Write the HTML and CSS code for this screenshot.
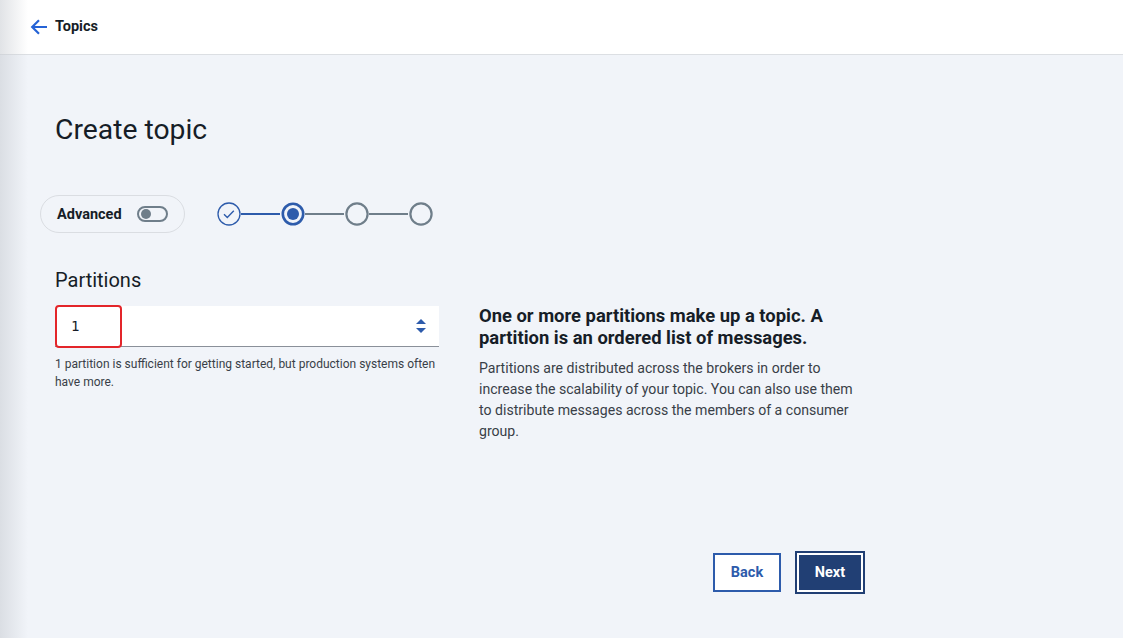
FILE: index.html
```html
<!DOCTYPE html>
<html lang="en">
<head>
<meta charset="utf-8">
<title>Create topic</title>
<link rel="stylesheet" href="styles.css">
</head>
<body>
<div class="shade"></div>
<header class="topbar">
  <a class="back-link" href="#">
    <svg class="back-icon" width="18" height="16" viewBox="0 0 18 16" aria-hidden="true">
      <path d="M17 8H2.5M9 1.2L2.2 8 9 14.8" fill="none" stroke="#2563d6" stroke-width="2.2"/>
    </svg>
    <span>Topics</span>
  </a>
</header>
<main class="page">
  <h1 class="title">Create topic</h1>
  <div class="controls">
    <div class="adv-pill">
      <span class="adv-label">Advanced</span>
      <span class="switch"><span class="knob"></span></span>
    </div>
    <svg class="stepper" width="218" height="28" viewBox="0 0 218 28" aria-hidden="true">
      <line x1="24" y1="14" x2="63" y2="14" stroke="#2d5bab" stroke-width="2"/>
      <line x1="88" y1="14" x2="127" y2="14" stroke="#6f7e8a" stroke-width="2"/>
      <line x1="152" y1="14" x2="191" y2="14" stroke="#6f7e8a" stroke-width="2"/>
      <circle cx="12" cy="14" r="11" fill="none" stroke="#2d5bab" stroke-width="1.3"/>
      <path d="M7 14.2l3.3 3.2 6.5-6.6" fill="none" stroke="#2d5bab" stroke-width="1.4"/>
      <circle cx="76" cy="14" r="10.2" fill="none" stroke="#2d5bab" stroke-width="2.6"/>
      <circle cx="76" cy="14" r="6" fill="#2d5bab"/>
      <circle cx="140" cy="14" r="10.6" fill="none" stroke="#6f7e8a" stroke-width="2.2"/>
      <circle cx="204" cy="14" r="10.6" fill="none" stroke="#6f7e8a" stroke-width="2.2"/>
    </svg>
  </div>

  <h2 class="section">Partitions</h2>
  <div class="cols">
    <div class="col-left">
      <div class="field">
        <span class="field-value">1</span>
        <span class="highlight"></span>
        <svg class="spin" width="12" height="16" viewBox="0 0 12 16" aria-hidden="true">
          <path d="M1 6L6 1l5 5z" fill="#2d5bab"/>
          <path d="M1 10l5 5 5-5z" fill="#2d5bab"/>
        </svg>
      </div>
      <p class="helper">1 partition is sufficient for getting started, but production systems often have more.</p>
    </div>
    <div class="col-right">
      <h3 class="info-title">One or more partitions make up a topic. A partition is an ordered list of messages.</h3>
      <p class="info-body">Partitions are distributed across the brokers in order to increase the scalability of your topic. You can also use them to distribute messages across the members of a consumer group.</p>
    </div>
  </div>
  <div class="actions">
    <button class="btn btn-secondary" type="button">Back</button>
    <button class="btn btn-primary" type="button">Next</button>
  </div>
</main>
</body>
</html>
```

FILE: styles.css
```css
* { box-sizing: border-box; }

html, body {
  margin: 0;
  padding: 0;
}

body {
  background: #f1f4f9;
  font-family: Roboto, "Liberation Sans", sans-serif;
  color: #161d27;
  width: 1123px;
  height: 638px;
  overflow: hidden;
  position: relative;
}

.shade {
  position: absolute;
  left: 0;
  top: 0;
  width: 28px;
  height: 100%;
  background: linear-gradient(to right, rgba(200, 204, 210, 0.55), rgba(200, 204, 210, 0));
  pointer-events: none;
  z-index: 5;
}

.topbar {
  height: 55px;
  background: #ffffff;
  border-bottom: 1px solid #dcdfe3;
  display: flex;
  align-items: center;
  padding-left: 30px;
}

.back-link {
  display: flex;
  align-items: center;
  gap: 7px;
  text-decoration: none;
  color: #161d27;
  font-weight: 700;
  font-size: 14.5px;
  margin-top: -1px;
}

.back-icon { display: block; }

.page {
  padding: 57px 0 0 55px;
  width: 865px;
}

.title {
  margin: 0;
  font-size: 28.3px;
  line-height: 36px;
  font-weight: 400;
  color: #161d27;
}

.controls {
  display: flex;
  align-items: center;
  margin: 47px 0 0 -15px;
  gap: 32px;
}

.adv-pill {
  width: 145px;
  height: 38px;
  border: 1px solid #dadde2;
  border-radius: 19px;
  display: flex;
  align-items: center;
  padding-left: 16px;
}

.adv-label {
  font-size: 14.5px;
  font-weight: 700;
  color: #161d27;
  width: 80px;
}

.switch {
  width: 31px;
  height: 16px;
  border: 2px solid #6f7e8a;
  border-radius: 8px;
  position: relative;
}

.knob {
  position: absolute;
  left: 2px;
  top: 1px;
  width: 10px;
  height: 10px;
  border-radius: 50%;
  background: #6f7e8a;
}

.stepper { display: block; }

.section {
  margin: 33px 0 0;
  font-size: 20px;
  line-height: 28px;
  font-weight: 400;
  color: #161d27;
}

.cols {
  display: grid;
  grid-template-columns: 384px 385px;
  column-gap: 40px;
  margin-top: 11px;
}

.field {
  position: relative;
  height: 41px;
  background: #ffffff;
  border-bottom: 1px solid #8a9099;
  display: flex;
  align-items: center;
  padding-left: 16px;
  margin-top: 1px;
}

.field-value {
  font-family: "DejaVu Sans Mono", "Liberation Mono", monospace;
  font-size: 14px;
  color: #161d27;
}

.highlight {
  position: absolute;
  left: 0;
  top: -1px;
  width: 67px;
  height: 43px;
  border: 2px solid #e3252a;
  border-radius: 4px;
}

.spin {
  position: absolute;
  right: 12px;
  top: 12px;
}

.helper {
  margin: 8px 0 0;
  font-size: 12px;
  line-height: 18px;
  color: #393f48;
}

.info-title {
  margin: 0;
  font-size: 18.4px;
  line-height: 22px;
  font-weight: 700;
  color: #161d27;
}

.info-body {
  margin: 9px 0 0;
  font-size: 14.1px;
  line-height: 21px;
  color: #393f48;
}

.actions {
  display: flex;
  justify-content: flex-end;
  align-items: center;
  gap: 14px;
  margin-top: 109px;
}

.btn {
  font-family: inherit;
  font-size: 14.5px;
  font-weight: 700;
  cursor: pointer;
  padding: 0;
}

.btn-secondary {
  width: 68px;
  height: 39px;
  background: #ffffff;
  border: 2px solid #2d5bab;
  color: #2d5bab;
}

.btn-primary {
  width: 70px;
  height: 43px;
  background: #213f74;
  border: 2px solid #213f74;
  box-shadow: inset 0 0 0 2px #ffffff;
  color: #ffffff;
}
```
